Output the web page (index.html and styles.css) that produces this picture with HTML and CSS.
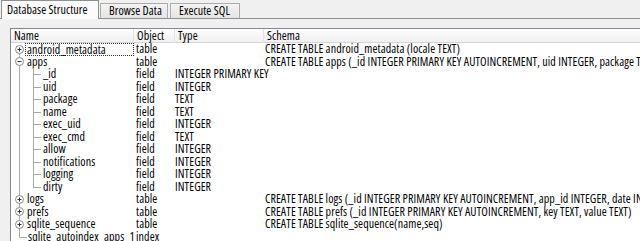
FILE: index.html
```html
<!DOCTYPE html>
<html lang="en">
<head>
  <meta charset="UTF-8" />
  <title>Database Structure</title>
  <link rel="stylesheet" href="styles.css">
</head>
<body>
  <div class="window">
    <!-- Tabs -->
    <div class="tabs">
      <div class="tab active">Database Structure</div>
      <div class="tab">Browse Data</div>
      <div class="tab">Execute SQL</div>
    </div>
    <!-- Structure pane -->
    <div class="pane">
      <div class="tree">
        <div class="row head">
          <div class="c name">Name</div>
          <div class="c obj">Object</div>
          <div class="c type">Type</div>
          <div class="c schema">Schema</div>
        </div>
        <div class="body">
          <div class="row">
            <div class="c name first"><svg class="exp" width="9" height="9" viewBox="0 0 9 9"><circle cx="4.5" cy="4.5" r="4" fill="#fff" stroke="#8a8a8a"/><path d="M2.5 4.5h4M4.5 2.5v4" stroke="#333"/></svg><span class="label focus">android_metadata</span></div>
            <div class="c obj">table</div>
            <div class="c type"></div>
            <div class="c schema">CREATE TABLE android_metadata (locale TEXT)</div>
          </div>
          <div class="row">
            <div class="c name root"><svg class="exp" width="9" height="9" viewBox="0 0 9 9"><circle cx="4.5" cy="4.5" r="4" fill="#fff" stroke="#8a8a8a"/><path d="M2.5 4.5h4" stroke="#333"/></svg><span class="label">apps</span></div>
            <div class="c obj">table</div>
            <div class="c type"></div>
            <div class="c schema">CREATE TABLE apps (_id INTEGER PRIMARY KEY AUTOINCREMENT, uid INTEGER, package TEXT, name TEXT, exec_uid INTEGER)</div>
          </div>
          <div class="row"><div class="c name child">_id</div><div class="c obj">field</div><div class="c type">INTEGER PRIMARY KEY</div><div class="c schema"></div></div>
          <div class="row"><div class="c name child">uid</div><div class="c obj">field</div><div class="c type">INTEGER</div><div class="c schema"></div></div>
          <div class="row"><div class="c name child">package</div><div class="c obj">field</div><div class="c type">TEXT</div><div class="c schema"></div></div>
          <div class="row"><div class="c name child">name</div><div class="c obj">field</div><div class="c type">TEXT</div><div class="c schema"></div></div>
          <div class="row"><div class="c name child">exec_uid</div><div class="c obj">field</div><div class="c type">INTEGER</div><div class="c schema"></div></div>
          <div class="row"><div class="c name child">exec_cmd</div><div class="c obj">field</div><div class="c type">TEXT</div><div class="c schema"></div></div>
          <div class="row"><div class="c name child">allow</div><div class="c obj">field</div><div class="c type">INTEGER</div><div class="c schema"></div></div>
          <div class="row"><div class="c name child">notifications</div><div class="c obj">field</div><div class="c type">INTEGER</div><div class="c schema"></div></div>
          <div class="row"><div class="c name child">logging</div><div class="c obj">field</div><div class="c type">INTEGER</div><div class="c schema"></div></div>
          <div class="row"><div class="c name child last">dirty</div><div class="c obj">field</div><div class="c type">INTEGER</div><div class="c schema"></div></div>
          <div class="row">
            <div class="c name root"><svg class="exp" width="9" height="9" viewBox="0 0 9 9"><circle cx="4.5" cy="4.5" r="4" fill="#fff" stroke="#8a8a8a"/><path d="M2.5 4.5h4M4.5 2.5v4" stroke="#333"/></svg><span class="label">logs</span></div>
            <div class="c obj">table</div>
            <div class="c type"></div>
            <div class="c schema">CREATE TABLE logs (_id INTEGER PRIMARY KEY AUTOINCREMENT, app_id INTEGER, date INTEGER, message TEXT)</div>
          </div>
          <div class="row">
            <div class="c name root"><svg class="exp" width="9" height="9" viewBox="0 0 9 9"><circle cx="4.5" cy="4.5" r="4" fill="#fff" stroke="#8a8a8a"/><path d="M2.5 4.5h4M4.5 2.5v4" stroke="#333"/></svg><span class="label">prefs</span></div>
            <div class="c obj">table</div>
            <div class="c type"></div>
            <div class="c schema">CREATE TABLE prefs (_id INTEGER PRIMARY KEY AUTOINCREMENT, key TEXT, value TEXT)</div>
          </div>
          <div class="row">
            <div class="c name root"><svg class="exp" width="9" height="9" viewBox="0 0 9 9"><circle cx="4.5" cy="4.5" r="4" fill="#fff" stroke="#8a8a8a"/><path d="M2.5 4.5h4M4.5 2.5v4" stroke="#333"/></svg><span class="label">sqlite_sequence</span></div>
            <div class="c obj">table</div>
            <div class="c type"></div>
            <div class="c schema">CREATE TABLE sqlite_sequence(name,seq)</div>
          </div>
          <div class="row">
            <div class="c name leaf-last"><span class="label">sqlite_autoindex_apps_1</span></div>
            <div class="c obj">index</div>
            <div class="c type"></div>
            <div class="c schema"></div>
          </div>
        </div>
      </div>
    </div>
  </div>
</body>
</html>
```

FILE: styles.css
```css
* { margin:0; padding:0; box-sizing:border-box; }
html, body { height:100%; overflow:hidden; }
body {
  background:#f0f0f0;
  font-family:"Open Sans", "Liberation Sans", sans-serif;
  font-stretch:75%;
  font-size:12px;
  letter-spacing:0.1px;
  color:#000;
  white-space:nowrap;
}
.window { width:640px; height:241px; display:flex; flex-direction:column; }

/* tabs */
.tabs { display:flex; align-items:flex-end; height:19px; padding-left:1px; border-bottom:1px solid #8e8f8f; }
.tab {
  height:15px; line-height:14px; padding:0 8px; margin-right:2px;
  border:1px solid #acacac; border-bottom:none;
  background:linear-gradient(#f3f3f3, #e5e5e5);
}
.tab:nth-child(2) { width:68px; }
.tab:nth-child(3) { width:70px; }
.tab.active {
  width:98px; height:19px; line-height:17px; padding-left:5px; margin-right:1px;
  margin-bottom:-1px; background:#fbfbfb; border-color:#8e8f8f;
}

/* pane with tree */
.pane { flex:1; padding:9px 0 0 10px; }
.tree { height:100%; background:#fff; border-left:1px solid #828790; border-top:1px solid #828790; overflow:hidden; }
.row { display:grid; grid-template-columns:123px 41px 89px 1fr; height:12.5px; line-height:12.5px; }
.c { padding-left:2px; overflow-x:clip; overflow-y:visible; }
.c.type { overflow:visible; padding-left:0; }
.c.schema { overflow:visible; padding-left:1px; }
.row.head { height:14px; line-height:14px; background:linear-gradient(#fdfdfd, #f0f0f0); border-bottom:1px solid #d5d5d5; }
.row.head .c { padding-left:3px; border-right:1px solid #e3e3e3; }
.row.head .c.schema { border-right:none; }

/* tree cells */
.c.name { display:flex; align-items:center; padding-left:4px; }
.row.head .c.name { padding-left:3px; }
.exp { flex:none; margin-right:3px; }
.label { display:block; }
.label.focus { flex:1; height:12.5px; line-height:11px; margin-left:-2px; padding-left:1px; border:1px dotted #333; }
.c.name.first { background:linear-gradient(#a9a9a9,#a9a9a9) 8px 100% / 1px 50% no-repeat; }
.c.name.root { background:linear-gradient(#a9a9a9,#a9a9a9) 8px 0 / 1px 100% no-repeat; }
.c.name.child {
  padding-left:32px;
  background:
    linear-gradient(#a9a9a9,#a9a9a9) 8px 0 / 1px 100% no-repeat,
    linear-gradient(#a9a9a9,#a9a9a9) 22px 0 / 1px 100% no-repeat,
    linear-gradient(#a9a9a9,#a9a9a9) 22px 6px / 8px 1px no-repeat;
}
.c.name.child.last {
  background:
    linear-gradient(#a9a9a9,#a9a9a9) 8px 0 / 1px 100% no-repeat,
    linear-gradient(#a9a9a9,#a9a9a9) 22px 0 / 1px 7px no-repeat,
    linear-gradient(#a9a9a9,#a9a9a9) 22px 6px / 8px 1px no-repeat;
}
.c.name.leaf-last {
  padding-left:17px;
  background:
    linear-gradient(#a9a9a9,#a9a9a9) 8px 0 / 1px 7px no-repeat,
    linear-gradient(#a9a9a9,#a9a9a9) 8px 6px / 8px 1px no-repeat;
}
```
